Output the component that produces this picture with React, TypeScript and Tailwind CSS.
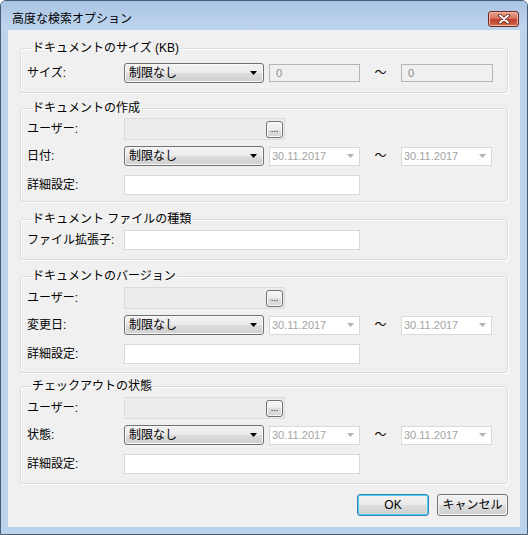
import type { ReactNode } from "react";

const fontStack = "font-['Liberation_Sans','Noto_Sans_CJK_JP',sans-serif]";

function Group({
  title,
  className,
  children,
}: {
  title: string;
  className: string;
  children: ReactNode;
}) {
  return (
    <fieldset
      className={`rounded-[3px] border border-[#d5dfe5] px-[6px] shadow-[inset_1px_1px_0_#ffffff,1px_1px_0_#ffffff] ${className}`}
    >
      <legend className="ml-[4px] px-[1px] text-[12px] leading-[16px] text-black">
        {title}
      </legend>
      {children}
    </fieldset>
  );
}

function Label({ children }: { children: ReactNode }) {
  return (
    <span className="w-[97px] shrink-0 text-[12px] leading-[16px] text-black">
      {children}
    </span>
  );
}

function Combo() {
  return (
    <div className="flex h-[20px] w-[140px] items-center justify-between rounded-[3px] border border-[#707070] bg-[linear-gradient(to_bottom,#f2f2f2,#ebebeb_50%,#dddddd_50%,#cfcfcf)] pl-[4px] pr-[6px] shadow-[inset_0_0_0_1px_#f8f8f8]">
      <span className="text-[12px] leading-[16px] text-black">制限なし</span>
      <svg width="7" height="4" viewBox="0 0 7 4">
        <polygon points="0,0 7,0 3.5,4" fill="#000000" />
      </svg>
    </div>
  );
}

function DateBox() {
  return (
    <div className="flex h-[19px] w-[91px] items-center justify-between border border-[#d9d9d9] bg-white pl-[2px] pr-[5px]">
      <span className="text-[11px] leading-[14px] text-[#a3a3a3]">30.11.2017</span>
      <svg width="7" height="4" viewBox="0 0 7 4">
        <polygon points="0,0 7,0 3.5,4" fill="#b4b4b4" />
      </svg>
    </div>
  );
}

function Tilde() {
  return (
    <span className="w-[41px] text-center text-[12px] leading-[16px] text-black">〜</span>
  );
}

function TextBox() {
  return <div className="h-[20px] w-[236px] border border-[#d9d9d9] bg-white" />;
}

function UserBox() {
  return (
    <div className="flex h-[22px] w-[161px] items-center justify-end border border-[#dcdcdc] bg-[#ececec] pr-[1px]">
      <div className="flex h-[17px] w-[17px] items-center justify-center rounded-[3px] border border-[#707070] bg-[linear-gradient(to_bottom,#f6f6f6,#ececec_50%,#dfdfdf_50%,#d4d4d4)] shadow-[inset_0_0_0_1px_#fbfbfb]">
        <span className="text-[9px] leading-[8px] text-black">...</span>
      </div>
    </div>
  );
}

function UserRow({ className }: { className: string }) {
  return (
    <div className={`flex items-center ${className}`}>
      <Label>ユーザー:</Label>
      <UserBox />
    </div>
  );
}

function DateRow({ label, className }: { label: string; className: string }) {
  return (
    <div className={`flex h-[20px] items-center ${className}`}>
      <Label>{label}</Label>
      <Combo />
      <div className="ml-[5px]">
        <DateBox />
      </div>
      <Tilde />
      <DateBox />
    </div>
  );
}

function DetailRow({ className }: { className: string }) {
  return (
    <div className={`flex items-center ${className}`}>
      <Label>詳細設定:</Label>
      <TextBox />
    </div>
  );
}

function Button({ children, primary }: { children: ReactNode; primary?: boolean }) {
  return (
    <button
      className={`flex h-[22px] items-center justify-center rounded-[3px] border text-[12px] leading-[16px] text-black bg-[linear-gradient(to_bottom,#f2f2f2,#ebebeb_50%,#dddddd_50%,#cfcfcf)] ${
        primary
          ? "w-[72px] border-[#3c7fb1] shadow-[inset_0_0_0_1px_#48d2f8]"
          : "w-[71px] border-[#707070] shadow-[inset_0_0_0_1px_#f8f8f8]"
      }`}
    >
      {children}
    </button>
  );
}

export default function App() {
  return (
    <div
      className={`flex h-[535px] w-[528px] flex-col rounded-t-[6px] border border-[#4b5b70] bg-[#bcd3ed] ${fontStack}`}
    >
      {/* title bar */}
      <div className="flex h-[29px] shrink-0 items-start justify-between rounded-t-[5px] bg-[linear-gradient(to_bottom,#a9c4e4,#c0d6ef)] pl-[11px] pr-[8px]">
        <span className="mt-[10px] text-[12px] leading-[16px] text-black">高度な検索オプション</span>
        <div className="mt-[10px] flex h-[16px] w-[31px] items-center justify-center rounded-[3px] border border-[#6e2a20] bg-[linear-gradient(to_bottom,#e8a493,#d5725c_45%,#c2402a_55%,#cf6a52)] shadow-[inset_0_0_0_1px_#efb7a8]">
          <svg width="12" height="10" viewBox="0 0 12 10">
            <path d="M2 1.5 L10 8.5 M10 1.5 L2 8.5" stroke="#5a2118" strokeWidth="3.6" strokeLinecap="round" />
            <path d="M2 1.5 L10 8.5 M10 1.5 L2 8.5" stroke="#ffffff" strokeWidth="2" strokeLinecap="round" />
          </svg>
        </div>
      </div>

      {/* client area */}
      <div className="mx-[7px] mb-[7px] flex flex-1 flex-col bg-[#f0f0f0] px-[12px] pt-[10px]">
        <Group title="ドキュメントのサイズ (KB)" className="pt-[7px] pb-[9px]">
          <div className="flex h-[20px] items-center">
            <Label>サイズ:</Label>
            <Combo />
            <div className="ml-[5px] flex h-[18px] w-[91px] items-center border border-[#b5b5b5] bg-[#f0f0f0] pl-[6px]">
              <span className="text-[11px] leading-[14px] text-[#8a8a8a]">0</span>
            </div>
            <Tilde />
            <div className="flex h-[18px] w-[92px] items-center border border-[#b5b5b5] bg-[#f0f0f0] pl-[6px]">
              <span className="text-[11px] leading-[14px] text-[#8a8a8a]">0</span>
            </div>
          </div>
        </Group>

        <Group title="ドキュメントの作成" className="mt-[7px] pt-[2px] pb-[6px]">
          <UserRow className="" />
          <DateRow label="日付:" className="mt-[6px]" />
          <DetailRow className="mt-[9px]" />
        </Group>

        <Group title="ドキュメント ファイルの種類" className="mt-[9px] pt-[3px] pb-[9px]">
          <div className="flex items-center">
            <Label>ファイル拡張子:</Label>
            <TextBox />
          </div>
        </Group>

        <Group title="ドキュメントのバージョン" className="mt-[8px] pt-[3px] pb-[8px]">
          <UserRow className="" />
          <DateRow label="変更日:" className="mt-[6px]" />
          <DetailRow className="mt-[9px]" />
        </Group>

        <Group title="チェックアウトの状態" className="mt-[5px] pt-[3px] pb-[9px]">
          <UserRow className="" />
          <DateRow label="状態:" className="mt-[6px]" />
          <DetailRow className="mt-[9px]" />
        </Group>

        <div className="mt-[10px] flex justify-end gap-[8px]">
          <Button primary>OK</Button>
          <Button>キャンセル</Button>
        </div>
      </div>
    </div>
  );
}
